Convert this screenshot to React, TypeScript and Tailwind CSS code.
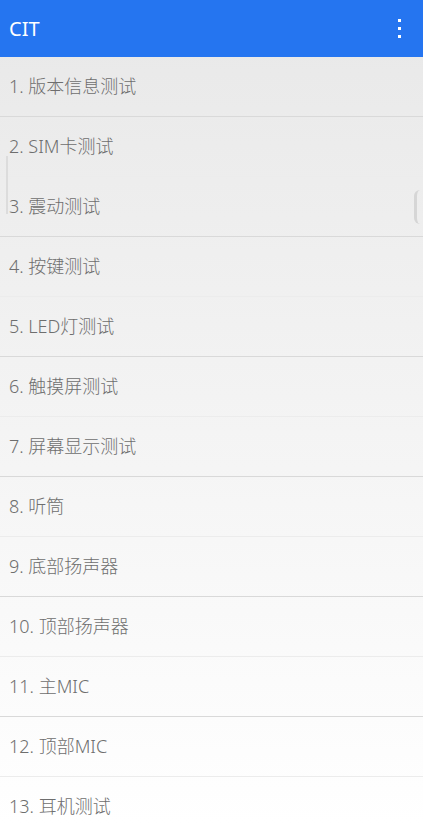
import React from 'react';

const items = [
  '1. 版本信息测试',
  '2. SIM卡测试',
  '3. 震动测试',
  '4. 按键测试',
  '5. LED灯测试',
  '6. 触摸屏测试',
  '7. 屏幕显示测试',
  '8. 听筒',
  '9. 底部扬声器',
  '10. 顶部扬声器',
  '11. 主MIC',
  '12. 顶部MIC',
  '13. 耳机测试',
];

export default function App() {
  return (
    <div
      className="relative w-[423px] h-[824px] overflow-hidden flex flex-col bg-gradient-to-b from-[#e8e8e8] to-[#ffffff]"
      style={{ fontFamily: '"Noto Sans", "Noto Sans CJK SC", sans-serif' }}
    >
      <div className="h-[57px] shrink-0 bg-[#2575f0] flex items-center justify-between pl-[9px] pr-[22px]">
        <span className="text-white text-[20px]">CIT</span>
        <div className="flex flex-col gap-[5px]">
          <span className="w-[3px] h-[3px] bg-white" />
          <span className="w-[3px] h-[3px] bg-white" />
          <span className="w-[3px] h-[3px] bg-white" />
        </div>
      </div>

      <div className="flex flex-col">
        {items.map((label, i) => (
          <div
            key={label}
            className={
              i % 2 === 0
                ? 'h-[60px] shrink-0 flex items-center pl-[9px] border-b border-[#d9d9d9]'
                : 'h-[60px] shrink-0 flex items-center pl-[9px] border-b border-[#ececec]'
            }
          >
            <span className="text-[18px] text-[#6e6e6e] font-light">{label}</span>
          </div>
        ))}
      </div>

      {/* faint edge artifacts */}
      <div className="absolute left-[6px] top-[156px] w-[2px] h-[58px] bg-[#dcdcdc]" />
      <div className="absolute left-[414px] top-[190px] w-[12px] h-[34px] rounded-full border-l-[3px] border-[#d6d6d6]" />
    </div>
  );
}
